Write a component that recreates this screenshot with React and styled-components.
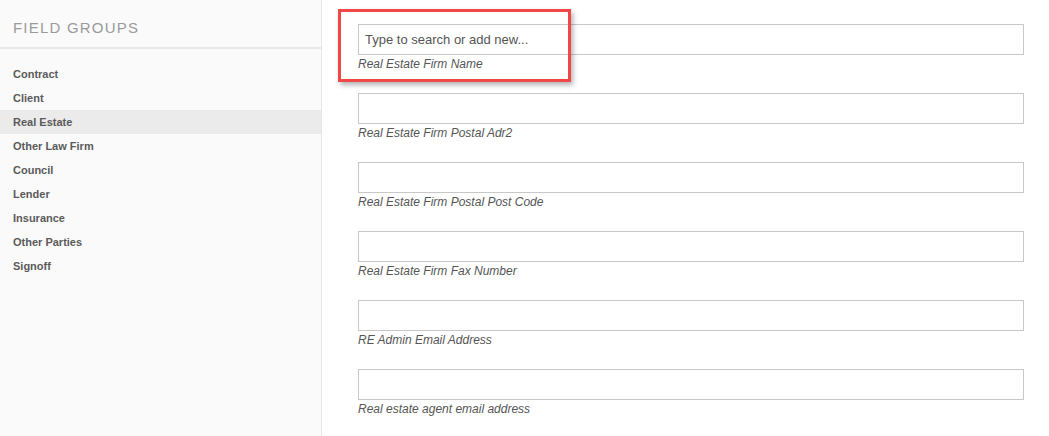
import React from "react"
import styled, { createGlobalStyle } from "styled-components"

const GlobalStyle = createGlobalStyle`
  html, body {
    margin: 0;
    padding: 0;
    background: #ffffff;
    font-family: "Liberation Sans", Arial, sans-serif;
  }
`

const Page = styled.div`
  display: flex;
  width: 1049px;
  height: 436px;
  overflow: hidden;
`

const Sidebar = styled.aside`
  width: 321px;
  flex-shrink: 0;
  background: #fafafa;
  border-right: 1px solid #e6e6e6;
`

const SidebarHeader = styled.div`
  box-sizing: border-box;
  height: 49px;
  padding: 20px 13px 0;
  line-height: 16px;
  border-bottom: 2px solid #e8e8e8;
  color: #9a9a9a;
  font-size: 15px;
  letter-spacing: 1.2px;
`

const GroupList = styled.ul`
  list-style: none;
  margin: 0;
  padding: 13px 0 0;
`

const GroupItem = styled.li`
  height: 24px;
  line-height: 24px;
  padding: 0 13px;
  font-size: 11px;
  font-weight: bold;
  color: #5a5a5a;
  background: ${props => (props.active ? "#ebebeb" : "transparent")};
`

const Main = styled.main`
  position: relative;
  flex: 1;
  padding: 24px 25px 0 36px;
  display: flex;
  flex-direction: column;
  gap: 22px;
`

const Field = styled.div`
  display: flex;
  flex-direction: column;
`

const Input = styled.input`
  box-sizing: border-box;
  width: 666px;
  height: 31px;
  border: 1px solid #c8c8c8;
  padding: 0 6px;
  font-family: "Liberation Sans", Arial, sans-serif;
  font-size: 13px;
  color: #555;
  outline: none;
  &::placeholder {
    color: #555;
  }
`

const Label = styled.span`
  margin-top: 2px;
  font-size: 12px;
  font-style: italic;
  color: #555;
  line-height: 14px;
`

const Highlight = styled.div`
  position: absolute;
  left: 16px;
  top: 9px;
  width: 227px;
  height: 67px;
  border: 3px solid #f04848;
  box-shadow: 2px 3px 5px rgba(0, 0, 0, 0.3);
  pointer-events: none;
`

const groups = [
  "Contract",
  "Client",
  "Real Estate",
  "Other Law Firm",
  "Council",
  "Lender",
  "Insurance",
  "Other Parties",
  "Signoff",
]

const fields = [
  { label: "Real Estate Firm Name", placeholder: "Type to search or add new..." },
  { label: "Real Estate Firm Postal Adr2" },
  { label: "Real Estate Firm Postal Post Code" },
  { label: "Real Estate Firm Fax Number" },
  { label: "RE Admin Email Address" },
  { label: "Real estate agent email address" },
]

function App() {
  return (
    <Page>
      <GlobalStyle />
      <Sidebar>
        <SidebarHeader>FIELD GROUPS</SidebarHeader>
        <GroupList>
          {groups.map(g => (
            <GroupItem key={g} active={g === "Real Estate"}>
              {g}
            </GroupItem>
          ))}
        </GroupList>
      </Sidebar>
      <Main>
        {fields.map(f => (
          <Field key={f.label}>
            <Input placeholder={f.placeholder || ""} />
            <Label>{f.label}</Label>
          </Field>
        ))}
        <Highlight />
      </Main>
    </Page>
  )
}

export default App
